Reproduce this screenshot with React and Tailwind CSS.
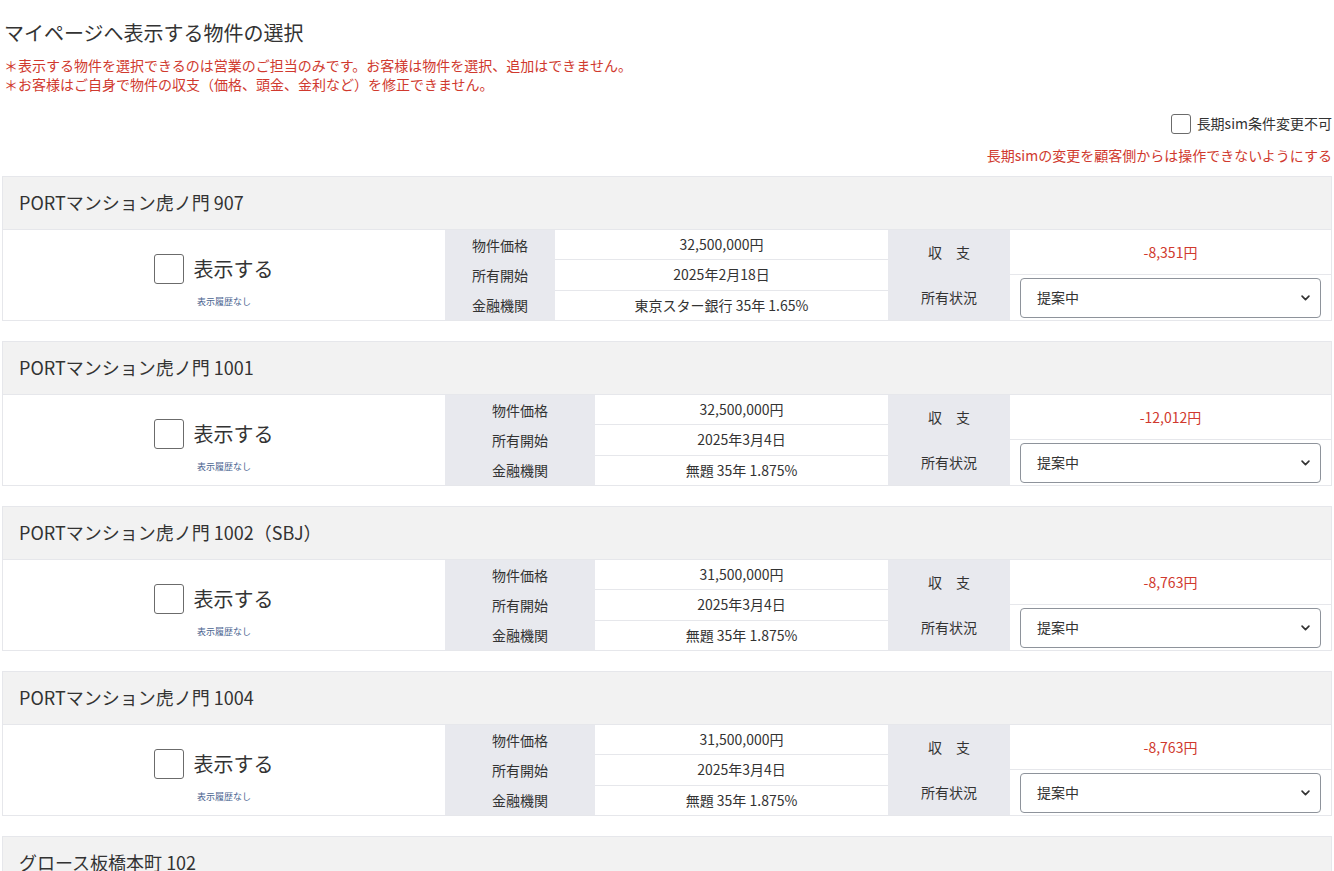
import React from 'react';

const properties = [
  {
    name: 'PORTマンション虎ノ門 907',
    price: '32,500,000円',
    start: '2025年2月18日',
    bank: '東京スター銀行 35年 1.65%',
    balance: '-8,351円',
    labelW: 'w-[110px]',
  },
  {
    name: 'PORTマンション虎ノ門 1001',
    price: '32,500,000円',
    start: '2025年3月4日',
    bank: '無題 35年 1.875%',
    balance: '-12,012円',
    labelW: 'w-[150px]',
  },
  {
    name: 'PORTマンション虎ノ門 1002（SBJ）',
    price: '31,500,000円',
    start: '2025年3月4日',
    bank: '無題 35年 1.875%',
    balance: '-8,763円',
    labelW: 'w-[150px]',
  },
  {
    name: 'PORTマンション虎ノ門 1004',
    price: '31,500,000円',
    start: '2025年3月4日',
    bank: '無題 35年 1.875%',
    balance: '-8,763円',
    labelW: 'w-[150px]',
  },
  {
    name: 'グロース板橋本町 102',
    price: '28,900,000円',
    start: '2025年3月4日',
    bank: '無題 35年 1.875%',
    balance: '-7,120円',
    labelW: 'w-[150px]',
  },
];

const PropertyCard = ({ item }) => {
  const rows = [
    ['物件価格', item.price],
    ['所有開始', item.start],
    ['金融機関', item.bank],
  ];

  return (
    <div className="border border-[#e6e7eb] mb-5">
      <div className="h-[53px] bg-[#f2f2f2] border-b border-[#e6e7eb] flex items-center pl-4 pb-[1px] text-[18px] text-[#333]">
        {item.name}
      </div>
      <div className="flex h-[90px] text-[14px] text-[#333]">
        {/* 表示チェック */}
        <div className="w-[442px] flex flex-col items-center pt-[24px] bg-white">
          <label className="flex items-center h-[30px] gap-[10px] pr-[21px]">
            <span className="w-[30px] h-[30px] border border-[#6b6b6b] rounded-[3px] bg-white" />
            <span className="text-[20px] text-[#333]">表示する</span>
          </label>
          <span className="text-[9px] leading-[12px] text-[#4a6490] mt-[12px]">表示履歴なし</span>
        </div>

        {/* 物件情報 */}
        <div className="flex-1 flex">
          <div className={`${item.labelW} bg-[#e8e9ee] flex flex-col`}>
            {rows.map(([label]) => (
              <div key={label} className="flex-1 flex items-center justify-center">
                {label}
              </div>
            ))}
          </div>
          <div className="flex-1 flex flex-col bg-white">
            {rows.map(([label, value], i) => (
              <div
                key={label}
                className={`flex-1 flex items-center justify-center ${i > 0 ? 'border-t border-[#e6e7eb]' : ''}`}
              >
                {value}
              </div>
            ))}
          </div>
        </div>

        {/* 収支・所有状況 */}
        <div className="w-[122px] bg-[#e8e9ee] flex flex-col">
          <div className="flex-1 flex items-center justify-center">収　支</div>
          <div className="flex-1 flex items-center justify-center">所有状況</div>
        </div>
        <div className="w-[321px] flex flex-col bg-white">
          <div className="h-[45px] flex items-center justify-center text-[#d0392e] border-b border-[#e6e7eb]">
            {item.balance}
          </div>
          <div className="flex-1 flex items-center pl-[10px] pr-[10px]">
            <div className="w-full h-[40px] border border-[#8e939b] rounded-[4px] flex items-center justify-between pl-4 pr-[9px] text-[14px] bg-white">
              <span>提案中</span>
              <svg width="11" height="11" viewBox="0 0 16 16" fill="none" stroke="#333" strokeWidth="2.4" strokeLinecap="round" strokeLinejoin="round">
                <path d="M3 6l5 5 5-5" />
              </svg>
            </div>
          </div>
        </div>
      </div>
    </div>
  );
};

const App = () => {
  return (
    <div
      className="min-h-screen bg-white px-[2px] pt-[19px] text-[#333]"
      style={{ fontFamily: '"Noto Sans CJK JP", "Noto Sans", sans-serif' }}
    >
      <h1 className="text-[20px] leading-[28px] text-[#333] pl-[2px]">マイページへ表示する物件の選択</h1>
      <div className="mt-[9px] text-[14px] leading-[19px] text-[#d0392e] pl-[2px]">
        <p>＊表示する物件を選択できるのは営業のご担当のみです。お客様は物件を選択、追加はできません。</p>
        <p>＊お客様はご自身で物件の収支（価格、頭金、金利など）を修正できません。</p>
      </div>

      <div className="flex flex-col items-end mt-[19px]">
        <label className="flex items-center gap-[6px] text-[14px] text-[#333]">
          <span className="w-[20px] h-[20px] border border-[#6b6b6b] rounded-[3px] bg-white" />
          長期sim条件変更不可
        </label>
        <p className="mt-[11px] text-[14px] text-[#d0392e]">長期simの変更を顧客側からは操作できないようにする</p>
      </div>

      <div className="mt-[10px]">
        {properties.map((item) => (
          <PropertyCard key={item.name} item={item} />
        ))}
      </div>
    </div>
  );
};

export default App;
